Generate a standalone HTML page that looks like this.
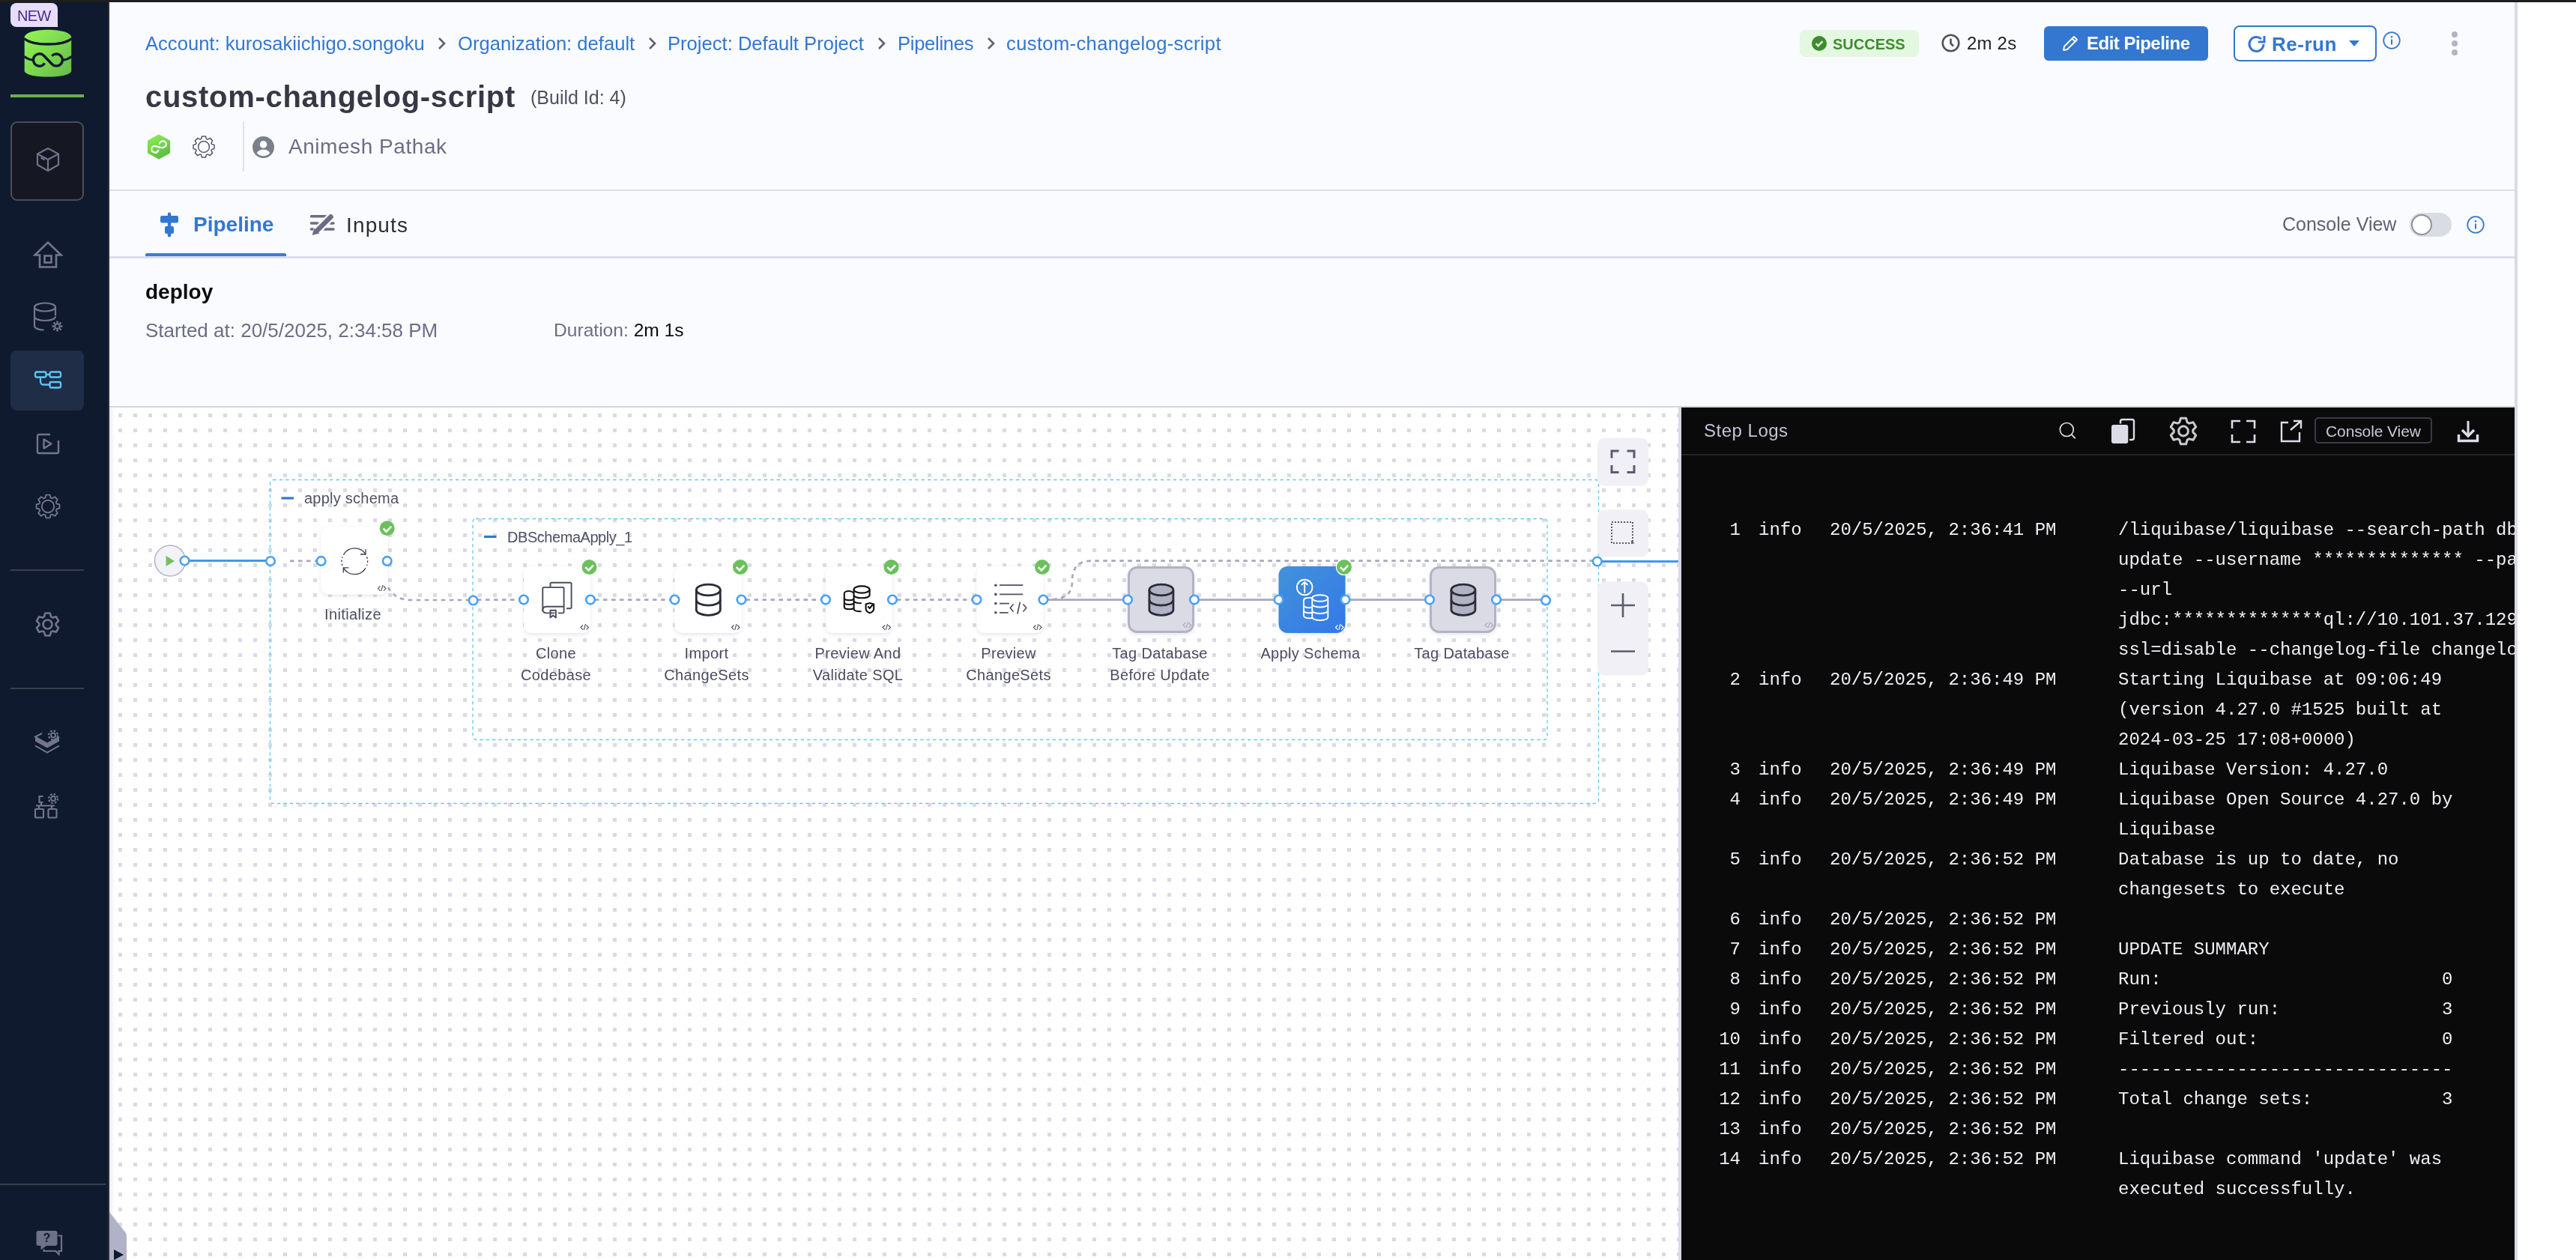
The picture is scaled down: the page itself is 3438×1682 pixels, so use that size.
<!DOCTYPE html>
<html><head><meta charset="utf-8">
<style>
*{box-sizing:border-box;margin:0;padding:0}
html,body{width:3438px;height:1682px;overflow:hidden;background:#fff;font-family:"Liberation Sans",sans-serif}
.t,.mono{will-change:transform}
.a{position:absolute}
.t{position:absolute;white-space:pre;line-height:1}
#top{left:0;top:0;width:3438px;height:3px;background:#1e1e1e}
#side{left:0;top:3px;width:146px;height:1679px;background:#101a2e;border-right:2px solid #2a2f3e}
#hdr{left:146px;top:3px;width:3210px;height:539px;background:#fafbfe}
#rb{left:3356px;top:3px;width:4px;height:1679px;background:#d9d9e6}
#canvas{left:146px;top:544px;width:2094px;height:1138px;background-color:#fff;
 background-image:linear-gradient(#fff,#fff),linear-gradient(#fff,#fff);}
#logs{left:2244px;top:544px;width:1112px;height:1138px;background:#0a0a0b;overflow:hidden}
.mono{font-family:"Liberation Mono",monospace}
</style></head><body>
<div id="top" class="a"></div>
<div id="side" class="a"></div>
<div id="hdr" class="a"></div>
<!--SIDE-->
<div class="a" style="left:14px;top:4px;width:63px;height:31.5px;background:#e7ddfb;border-radius:8px 8px 0 8px"></div>
<div class="t" style="left:23px;top:11px;font-size:20px;color:#4a2a8a;letter-spacing:-0.6px">NEW</div>
<svg class="a" style="left:30px;top:37px" width="68" height="68" viewBox="0 0 68 68">
 <defs><linearGradient id="lg" x1="0" y1="0" x2="1" y2="1"><stop offset="0" stop-color="#94f855"/><stop offset="1" stop-color="#66b94a"/></linearGradient></defs>
 <path d="M2.7 13 V57.5 C2.7 62.5 16 65.6 34 65.6 S65.2 62.5 65.2 57.5 V13 C65.2 7 52 2.8 34 2.8 S2.7 7 2.7 13z" fill="url(#lg)"/>
 <path d="M2.5 14.5 C8 19.5 20 22 34 22 S60 19.5 65.5 14.5" fill="none" stroke="#101a2e" stroke-width="3.3"/>
 <path d="M2.5 38.5 C6.5 41.5 10.5 43 14.6 43" fill="none" stroke="#101a2e" stroke-width="3.3"/>
 <path d="M53.6 43 C57.5 43 61.5 41.5 65.5 38.5" fill="none" stroke="#101a2e" stroke-width="3.3"/>
 <path d="M14.6 43 A8.1 8.1 0 0 1 28.5 37.3 L39.5 48.7 A8.1 8.1 0 1 0 39.3 37.6" fill="none" stroke="#101a2e" stroke-width="3.4"/>
 <path d="M14.6 43 A8.1 8.1 0 0 0 29.6 47.4" fill="none" stroke="#101a2e" stroke-width="3.4"/>
</svg>
<div class="a" style="left:14px;top:126px;width:98px;height:4px;background:#6db04f"></div>
<div class="a" style="left:14px;top:162px;width:98px;height:106px;background:#151823;border:2px solid #4a4d5c;border-radius:9px"></div>
<svg class="a" style="left:46px;top:195px" width="36" height="36" viewBox="0 0 36 36"><g fill="none" stroke="#6f7288" stroke-width="2.2" stroke-linejoin="round"><path d="M18 3L32 10.5V25L18 33L4 25V10.5z"/><path d="M4 10.5L18 18L32 10.5M18 18V33"/><path d="M8.5 15.5l5 2.7"/></g></svg>
<svg class="a" style="left:44px;top:321px" width="40" height="38" viewBox="0 0 40 38"><g fill="none" stroke="#72758d" stroke-width="2.6"><path d="M2.5 19.5L20 2.5 37.5 19.5H31V35.5H9V19.5z" stroke-linejoin="miter"/><rect x="15.5" y="20.5" width="9" height="9"/></g></svg>
<svg class="a" style="left:44px;top:402px" width="42" height="42" viewBox="0 0 42 42"><g fill="none" stroke="#72758d" stroke-width="2.2"><ellipse cx="16" cy="8" rx="14" ry="5.5"/><path d="M2 8V33c0 3 5 5.5 12.5 5.5M30 8V19.5"/><path d="M2 20.5c0 3 6 5.5 14 5.5s14-2.5 14-5.5"/></g><g transform="translate(32.5 33.5)"><circle r="3.3" fill="none" stroke="#72758d" stroke-width="2.2"/><path d="M0-7v2.6M0 4.4V7M-7 0h2.6M4.4 0H7M-5 -5l1.8 1.8M3.2 3.2L5 5M-5 5l1.8-1.8M3.2-3.2L5-5" stroke="#72758d" stroke-width="2.4"/></g></svg>
<div class="a" style="left:14px;top:468px;width:98px;height:80px;background:#1f2d47;border-radius:8px"></div>
<svg class="a" style="left:45px;top:494px" width="38" height="26" viewBox="0 0 38 26"><g fill="none" stroke="#5ec6f5" stroke-width="2.3"><rect x="2" y="2.5" width="14.5" height="7" rx="2"/><rect x="21.5" y="2.5" width="14.5" height="7" rx="2"/><rect x="21.5" y="16" width="14.5" height="7.5" rx="2"/><path d="M16.5 6h5M9 9.5v6a4 4 0 0 0 4 4h8.5"/></g></svg>
<svg class="a" style="left:47px;top:577px" width="34" height="30" viewBox="0 0 34 30"><g fill="none" stroke="#72758d" stroke-width="2.4" stroke-linejoin="round"><path d="M20 3H5a2 2 0 0 0-2 2v21a2 2 0 0 0 2 2h24a2 2 0 0 0 2-2V11"/><path d="M11.5 9.5v12l10-6z"/></g></svg>
<svg class="a" style="left:46px;top:658px" width="36" height="36" viewBox="0 0 36 36"><path d="M14.50 6.31 L15.40 2.62 L20.60 2.62 L21.50 6.31 L23.79 7.26 L27.04 5.28 L30.72 8.96 L28.74 12.21 L29.69 14.50 L33.38 15.40 L33.38 20.60 L29.69 21.50 L28.74 23.79 L30.72 27.04 L27.04 30.72 L23.79 28.74 L21.50 29.69 L20.60 33.38 L15.40 33.38 L14.50 29.69 L12.21 28.74 L8.96 30.72 L5.28 27.04 L7.26 23.79 L6.31 21.50 L2.62 20.60 L2.62 15.40 L6.31 14.50 L7.26 12.21 L5.28 8.96 L8.96 5.28 L12.21 7.26Z" fill="none" stroke="#72758d" stroke-width="1.9" stroke-linejoin="round"/><circle cx="18" cy="18" r="8.2" fill="none" stroke="#72758d" stroke-width="1.9"/></svg>
<div class="a" style="left:14px;top:760px;width:98px;height:2px;background:#3b3f4e"></div>
<svg class="a" style="left:46px;top:816px" width="35" height="35" viewBox="0 0 35 35"><path d="M12.90 7.29 L14.30 2.54 L20.70 2.54 L22.10 7.29 L24.04 8.41 L28.86 7.25 L32.06 12.79 L28.64 16.38 L28.64 18.62 L32.06 22.21 L28.86 27.75 L24.04 26.59 L22.10 27.71 L20.70 32.46 L14.30 32.46 L12.90 27.71 L10.96 26.59 L6.14 27.75 L2.94 22.21 L6.36 18.62 L6.36 16.38 L2.94 12.79 L6.14 7.25 L10.96 8.41Z" fill="none" stroke="#72758d" stroke-width="2.6" stroke-linejoin="round"/><circle cx="17.5" cy="17.5" r="6" fill="none" stroke="#72758d" stroke-width="2.6"/></svg>
<div class="a" style="left:14px;top:918px;width:98px;height:2px;background:#3b3f4e"></div>
<svg class="a" style="left:45px;top:973px" width="36" height="38" viewBox="0 0 36 38"><g fill="none" stroke="#72758d" stroke-width="2"><path d="M11 6L2 10.5 18 19.5 34 10.5"/><path d="M2 22.5L18 31.5 34 22.5"/></g><path d="M2 16.5L18 25.5 34 16.5 34 10.5 18 19.5 2 10.5z" fill="#72758d"/><g transform="translate(26 8.5)"><circle r="3" fill="none" stroke="#72758d" stroke-width="2"/><circle r="6" fill="none" stroke="#72758d" stroke-width="2.2" stroke-dasharray="2.6 2.1"/></g></svg>
<svg class="a" style="left:45px;top:1057px" width="36" height="38" viewBox="0 0 36 38"><g fill="none" stroke="#72758d" stroke-width="2.2"><path d="M12.5 6H7.5V14H12.5M10 14V18.5M3 18.5H28M7 18.5V23M24 18.5V23"/><rect x="2" y="23" width="11" height="11.5" rx="1"/><rect x="19.5" y="23" width="11" height="11.5" rx="1"/></g><g transform="translate(26 9)"><circle r="3" fill="none" stroke="#72758d" stroke-width="2"/><circle r="6" fill="none" stroke="#72758d" stroke-width="2.2" stroke-dasharray="2.6 2.1"/></g></svg>
<div class="a" style="left:0;top:1580px;width:141px;height:2px;background:#3b3f4e"></div>
<svg class="a" style="left:48px;top:1641px" width="38" height="35" viewBox="0 0 38 35"><path d="M3.5 2h22a3 2.8 0 0 1 3 3v14a3 3 0 0 1-3 3H14l-7.5 5.5V22H3.5a3 3 0 0 1-3-3V5a3 3 0 0 1 3-3z" fill="#6e7187"/><path d="M29.5 8.5h4.5v20.5h-3.5v4.5l-4-4.5H10.5v-2.5" fill="none" stroke="#6e7187" stroke-width="2.2"/><text x="14.5" y="17" font-family="Liberation Sans" font-weight="700" font-size="16" fill="#101a2e" text-anchor="middle">?</text></svg>
<!--/SIDE-->

<div class="a" style="left:146px;top:253px;width:3210px;height:2px;background:#dcdde7"></div>
<div class="a" style="left:146px;top:342px;width:3210px;height:3px;background:#dcdde7"></div>
<div class="a" style="left:194px;top:338px;width:188px;height:4px;background:#3b7bd4;border-radius:2px 2px 0 0"></div>
<div class="a" style="left:146px;top:542px;width:3210px;height:2px;background:#d5d6e1"></div>
<div id="canvas" class="a"></div>
<!--CANVAS-->
<svg class="a" style="left:146px;top:544px" width="2094" height="1138" viewBox="146 544 2094 1138">
<defs>
<pattern id="dots" x="158" y="552" width="20" height="20" patternUnits="userSpaceOnUse"><rect x="0" y="0" width="5" height="5" fill="#dadae6"/></pattern>
<linearGradient id="shl" x1="0" x2="1" y1="0" y2="0"><stop offset="0" stop-color="#e9e9ef" stop-opacity="0.9"/><stop offset="1" stop-color="#fff" stop-opacity="0"/></linearGradient>
<linearGradient id="blue" x1="0" y1="0" x2="1" y2="1"><stop offset="0" stop-color="#4192da"/><stop offset="1" stop-color="#3478e8"/></linearGradient>
<filter id="sh" x="-20%" y="-20%" width="140%" height="150%"><feDropShadow dx="0" dy="2" stdDeviation="2.5" flood-color="#60607a" flood-opacity="0.16"/></filter>
</defs>
<rect x="146" y="544" width="2094" height="1138" fill="#fff"/>
<rect x="146" y="544" width="2094" height="1138" fill="url(#dots)"/>
<rect x="146" y="544" width="10" height="1138" fill="url(#shl)"/>
<rect x="360.5" y="640.5" width="1773" height="432" rx="4" fill="none" stroke="#66c8f3" stroke-width="1.35" stroke-dasharray="4.4 4"/>
<rect x="631" y="692.5" width="1434" height="295" rx="4" fill="none" stroke="#66c8f3" stroke-width="1.35" stroke-dasharray="4.4 4"/>
<path d="M375.5 665h16.5" stroke="#3477d0" stroke-width="3.2"/>
<path d="M646 716.5h16.5" stroke="#3477d0" stroke-width="3.2"/>
<circle cx="227" cy="748.5" r="20.5" fill="#f2f2f9" stroke="#b3b4c6" stroke-width="1.5"/>
<path d="M221.5 742v14l11.5-7z" fill="#74c25c"/>
<path d="M252 748.5H355" stroke="#4098ee" stroke-width="3"/>
<circle cx="246.5" cy="748.5" r="5.8" fill="#fff" stroke="#4aa0f5" stroke-width="2.6"/>
<circle cx="361" cy="749" r="5.8" fill="#fff" stroke="#4aa0f5" stroke-width="2.6"/>
<path d="M387 748.8H423" stroke="#a7a8ba" stroke-width="2.7" stroke-dasharray="5.5 5.5" fill="none"/>
<path d="M518 784 Q527 801 549 801 H626" stroke="#a7a8ba" stroke-width="2.7" stroke-dasharray="5.5 5.5" fill="none"/>
<path d="M637 800.6H693" stroke="#a7a8ba" stroke-width="2.7" stroke-dasharray="5.5 5.5" fill="none"/>
<path d="M794.0 800.6H894.5" stroke="#a7a8ba" stroke-width="2.7" stroke-dasharray="5.5 5.5" fill="none"/>
<path d="M995.5 800.6H1096.0" stroke="#a7a8ba" stroke-width="2.7" stroke-dasharray="5.5 5.5" fill="none"/>
<path d="M1197.0 800.6H1297.5" stroke="#a7a8ba" stroke-width="2.7" stroke-dasharray="5.5 5.5" fill="none"/>
<path d="M1398 800.6H2057" stroke="#a7a8ba" stroke-width="2.7" fill="none"/>
<path d="M1394 800.6 C1424 800.6 1431 792 1431 775 C1431 757 1440 748.7 1456 748.7 H2126" stroke="#a7a8ba" stroke-width="2.7" stroke-dasharray="5.5 5.5" fill="none"/>
<path d="M2137 749.5H2240" stroke="#4098ee" stroke-width="3"/>
<rect x="428.5" y="703.5" width="89" height="90" rx="10" fill="#fff" filter="url(#sh)"/>
<g fill="none" stroke="#3a3d4d" stroke-width="1.3"><path d="M458.3 740.6A17.3 17.3 0 0 1 488.0 740.0"/><path d="M488.0 758.4A17.3 17.3 0 0 1 458.3 757.9"/><path d="M457.0 755.1A17.3 17.3 0 0 1 457.0 743.3" stroke-dasharray="2.6 2.6"/><path d="M489.6 743.3A17.3 17.3 0 0 1 489.6 755.1" stroke-dasharray="2.6 2.6"/><path d="M488.0 733.2V740.0H481.0"/><path d="M458.3 764.6V757.9H465.3"/></g>
<path d="M507.5 782.5 l-3 3.1 3 3.1 M511.0 781 l-2.2 7.8 M512.0 782.5 l3 3.1 -3 3.1" fill="none" stroke="#4f5162" stroke-width="1.15"/>
<circle cx="428.6" cy="748.9" r="5.8" fill="#fff" stroke="#4aa0f5" stroke-width="2.6"/>
<circle cx="516.7" cy="748.9" r="5.8" fill="#fff" stroke="#4aa0f5" stroke-width="2.6"/>
<circle cx="516.7" cy="705.3" r="10" fill="#6cc05b"/><path d="M511.50000000000006 705.5l4.2 4.2 6.4-6.8" fill="none" stroke="#fff" stroke-width="2.6"/>
<rect x="699.0" y="756" width="89" height="89" rx="10" fill="#fff" filter="url(#sh)"/>
<rect x="900.5" y="756" width="89" height="89" rx="10" fill="#fff" filter="url(#sh)"/>
<rect x="1102.0" y="756" width="89" height="89" rx="10" fill="#fff" filter="url(#sh)"/>
<rect x="1303.5" y="756" width="89" height="89" rx="10" fill="#fff" filter="url(#sh)"/>
<rect x="1506.5" y="757.5" width="86" height="86" rx="11" fill="#dbdbe5" stroke="#b1b2c4" stroke-width="3" filter="url(#sh)"/>
<rect x="1706.5" y="756" width="89" height="89" rx="12" fill="url(#blue)" filter="url(#sh)"/>
<rect x="1909.5" y="757.5" width="86" height="86" rx="11" fill="#dbdbe5" stroke="#b1b2c4" stroke-width="3" filter="url(#sh)"/>
<g fill="none" stroke="#4a4c5e" stroke-width="1.9" stroke-linejoin="round"><path d="M734.5 783.8V779a1.3 1.3 0 0 1 1.3-1.3h25.5a1.3 1.3 0 0 1 1.3 1.3v32a1.3 1.3 0 0 1-1.3 1.3H756"/><path d="M724.3 816V785.4a1.3 1.3 0 0 1 1.3-1.3h25.7a1.3 1.3 0 0 1 1.3 1.3v31.7a1.3 1.3 0 0 1-1.3 1.3H745"/><path d="M740.3 818.4H730c-3.5 0-5.7-1.8-5.7-4.3s2.2-4.3 5.7-4.3h22.5"/><path d="M734.5 814.8v9.6l3.7-3 3.7 3v-9.6z"/></g>
<g stroke="#2a2c38" stroke-width="2.8" fill="none"><path d="M929.3 787.5160000000001V813.884A16.0 7.416 0 0 0 961.3 813.884V787.5160000000001"/><ellipse cx="945.3" cy="787.5160000000001" rx="16.0" ry="7.416"/><path d="M929.3 800.7A16.0 7.416 0 0 0 961.3 800.7" fill="none"/></g>
<g stroke="#2a2c38" stroke-width="2.8" fill="#b1b2c3"><path d="M1533.9 787.5160000000001V813.884A16.0 7.416 0 0 0 1565.9 813.884V787.5160000000001"/><ellipse cx="1549.9" cy="787.5160000000001" rx="16.0" ry="7.416"/><path d="M1533.9 800.7A16.0 7.416 0 0 0 1565.9 800.7" fill="none"/></g>
<g stroke="#2a2c38" stroke-width="2.8" fill="#b1b2c3"><path d="M1936.9 787.5160000000001V813.884A16.0 7.416 0 0 0 1968.9 813.884V787.5160000000001"/><ellipse cx="1952.9" cy="787.5160000000001" rx="16.0" ry="7.416"/><path d="M1936.9 800.7A16.0 7.416 0 0 0 1968.9 800.7" fill="none"/></g>
<g fill="none" stroke="#111" stroke-width="2.1"><path d="M1139.5 791.5c-2-1.7-5-2.5-6.5-2.5-3.6 0-6.2 1.5-6.2 3.3v18c0 1.8 2.8 3 6.4 3 2.5 0 5-.5 6.5-1.5"/><path d="M1126.8 798.3c0 1.8 2.8 3 6.4 3 2.5 0 5-.5 6.3-1.4M1126.8 804c0 1.8 2.8 3 6.4 3 2.5 0 5-.5 6.3-1.4"/><ellipse cx="1150.1" cy="787" rx="10.5" ry="4.6"/><path d="M1139.6 787v26c0 1.9 3.5 3.3 10 3.3"/><path d="M1160.6 787v7.5c0 2-4.5 3.8-10.5 3.8s-10.5-1.8-10.5-3.8M1139.6 802c0 2 4.5 3.3 10.2 3.3"/><path d="M1155.6 806.5l5.3-1.4 5.3 1.4v6c0 3-2.5 4.8-5.3 5.8-2.8-1-5.3-2.8-5.3-5.8z" /><path d="M1158.3 809.5l2.4 2.4 4-4.6"/></g>
<g fill="#4f5162"><circle cx="1328.9" cy="781.2" r="1.8"/><circle cx="1328.9" cy="793.4" r="1.8"/><circle cx="1328.9" cy="805.6" r="1.8"/><circle cx="1328.9" cy="817.8" r="1.8"/></g><g fill="none" stroke="#4f5162" stroke-width="1.7"><path d="M1334 781.2h31.3M1334 793.4h31.3M1334 805.6h13M1334 817.8h11.7"/><path d="M1352.5 806.5l-4.2 5 4.2 5M1365.5 806.5l4.2 5-4.2 5M1361.3 803.8l-3.4 15.7"/></g>
<g fill="none" stroke="#fff" stroke-width="1.9"><circle cx="1741.2" cy="784" r="10.3"/><path d="M1741.2 791.5v-14.5M1737 781l4.2-4.2 4.2 4.2"/><path d="M1751.5 798.2c-1.3-.2-2.7-.3-3.8-.3-4.5 0-7.7 1.4-7.7 3.2v21c0 1.8 3.4 3.2 7.8 3.2 1.3 0 2.5-.1 3.7-.3M1740 808c0 1.8 3.4 3.2 7.8 3.2 1.3 0 2.5-.1 3.7-.3M1740 815c0 1.8 3.4 3.2 7.8 3.2 1.3 0 2.5-.1 3.7-.3"/><ellipse cx="1761.8" cy="798.5" rx="10.5" ry="4.3"/><path d="M1751.3 798.5v25.5c0 2.2 4.7 4 10.5 4s10.5-1.8 10.5-4V798.5M1751.3 806.5c0 2.2 4.7 4 10.5 4s10.5-1.8 10.5-4M1751.3 815c0 2.2 4.7 4 10.5 4s10.5-1.8 10.5-4"/></g>
<path d="M778.0 834.5 l-3 3.1 3 3.1 M781.5 833 l-2.2 7.8 M782.5 834.5 l3 3.1 -3 3.1" fill="none" stroke="#4f5162" stroke-width="1.15"/>
<path d="M979.5 834.5 l-3 3.1 3 3.1 M983.0 833 l-2.2 7.8 M984.0 834.5 l3 3.1 -3 3.1" fill="none" stroke="#4f5162" stroke-width="1.15"/>
<path d="M1181.0 834.5 l-3 3.1 3 3.1 M1184.5 833 l-2.2 7.8 M1185.5 834.5 l3 3.1 -3 3.1" fill="none" stroke="#4f5162" stroke-width="1.15"/>
<path d="M1382.5 834.5 l-3 3.1 3 3.1 M1386.0 833 l-2.2 7.8 M1387.0 834.5 l3 3.1 -3 3.1" fill="none" stroke="#4f5162" stroke-width="1.15"/>
<path d="M1582.0 831.5 l-3 3.1 3 3.1 M1585.5 830 l-2.2 7.8 M1586.5 831.5 l3 3.1 -3 3.1" fill="none" stroke="#a9aabb" stroke-width="1.15"/>
<path d="M1785.5 834.5 l-3 3.1 3 3.1 M1789.0 833 l-2.2 7.8 M1790.0 834.5 l3 3.1 -3 3.1" fill="none" stroke="#fff" stroke-width="1.15"/>
<path d="M1985.0 831.5 l-3 3.1 3 3.1 M1988.5 830 l-2.2 7.8 M1989.5 831.5 l3 3.1 -3 3.1" fill="none" stroke="#a9aabb" stroke-width="1.15"/>
<circle cx="699.0" cy="800.6" r="5.8" fill="#fff" stroke="#4aa0f5" stroke-width="2.6"/>
<circle cx="788.0" cy="800.6" r="5.8" fill="#fff" stroke="#4aa0f5" stroke-width="2.6"/>
<circle cx="900.5" cy="800.6" r="5.8" fill="#fff" stroke="#4aa0f5" stroke-width="2.6"/>
<circle cx="989.5" cy="800.6" r="5.8" fill="#fff" stroke="#4aa0f5" stroke-width="2.6"/>
<circle cx="1102.0" cy="800.6" r="5.8" fill="#fff" stroke="#4aa0f5" stroke-width="2.6"/>
<circle cx="1191.0" cy="800.6" r="5.8" fill="#fff" stroke="#4aa0f5" stroke-width="2.6"/>
<circle cx="1303.5" cy="800.6" r="5.8" fill="#fff" stroke="#4aa0f5" stroke-width="2.6"/>
<circle cx="1392.5" cy="800.6" r="5.8" fill="#fff" stroke="#4aa0f5" stroke-width="2.6"/>
<circle cx="1505.0" cy="800.6" r="5.8" fill="#fff" stroke="#4aa0f5" stroke-width="2.6"/>
<circle cx="1594.0" cy="800.6" r="5.8" fill="#fff" stroke="#4aa0f5" stroke-width="2.6"/>
<circle cx="1706.5" cy="800.6" r="5.8" fill="#fff" stroke="#4aa0f5" stroke-width="2.6"/>
<circle cx="1795.5" cy="800.6" r="5.8" fill="#fff" stroke="#4aa0f5" stroke-width="2.6"/>
<circle cx="1908.0" cy="800.6" r="5.8" fill="#fff" stroke="#4aa0f5" stroke-width="2.6"/>
<circle cx="1997.0" cy="800.6" r="5.8" fill="#fff" stroke="#4aa0f5" stroke-width="2.6"/>
<circle cx="631.6" cy="801.5" r="5.8" fill="#fff" stroke="#4aa0f5" stroke-width="2.6"/>
<circle cx="2063" cy="801.4" r="5.8" fill="#fff" stroke="#4aa0f5" stroke-width="2.6"/>
<circle cx="2131.8" cy="749.5" r="5.8" fill="#fff" stroke="#4aa0f5" stroke-width="2.6"/>
<circle cx="786.5" cy="757" r="10" fill="#6cc05b"/><path d="M781.3 757.2l4.2 4.2 6.4-6.8" fill="none" stroke="#fff" stroke-width="2.6"/>
<circle cx="988" cy="757" r="10" fill="#6cc05b"/><path d="M982.8 757.2l4.2 4.2 6.4-6.8" fill="none" stroke="#fff" stroke-width="2.6"/>
<circle cx="1189.5" cy="757" r="10" fill="#6cc05b"/><path d="M1184.3 757.2l4.2 4.2 6.4-6.8" fill="none" stroke="#fff" stroke-width="2.6"/>
<circle cx="1391" cy="757" r="10" fill="#6cc05b"/><path d="M1385.8 757.2l4.2 4.2 6.4-6.8" fill="none" stroke="#fff" stroke-width="2.6"/>
<circle cx="1794" cy="757" r="11.2" fill="#fff"/><circle cx="1794" cy="757" r="10" fill="#6cc05b"/><path d="M1788.8 757.2l4.2 4.2 6.4-6.8" fill="none" stroke="#fff" stroke-width="2.6"/>
<rect x="2132" y="584.5" width="68" height="64" rx="9" fill="#f0f0f6"/>
<rect x="2132" y="680.5" width="68" height="63" rx="9" fill="#f0f0f6"/>
<rect x="2132" y="776.5" width="68" height="125" rx="9" fill="#f0f0f6"/>
<g fill="none" stroke="#5a5d70" stroke-width="3"><path d="M2151 611.5v-9.5h9.5M2171.5 602h9.5v9.5M2181 621v9.5h-9.5M2160.5 630.5H2151V621"/></g>
<g fill="none" stroke="#5a5d70" stroke-width="2" stroke-dasharray="2 2"><path d="M2151 697h28v28h-28z"/></g><path d="M2177 722l3.5 3.5" stroke="#5a5d70" stroke-width="1.5"/>
<path d="M2150 808h32M2166 792v32M2150 869.5h32" stroke="#5a5d70" stroke-width="2.6"/>
</svg>
<div class="t" style="left:406px;top:654.7px;font-size:20px;color:#4f5162;letter-spacing:0.25px">apply schema</div>
<div class="t" style="left:676.5px;top:707px;font-size:20px;color:#4f5162;letter-spacing:-0.45px">DBSchemaApply_1</div>
<div class="t" style="left:321px;top:810.4px;width:300px;text-align:center;font-size:20px;color:#4a4c5e;letter-spacing:0.35px">Initialize</div>
<div class="t" style="left:591.5px;top:862.4px;width:300px;text-align:center;font-size:20px;color:#4a4c5e;letter-spacing:0.35px">Clone</div>
<div class="t" style="left:591.5px;top:891.4px;width:300px;text-align:center;font-size:20px;color:#4a4c5e;letter-spacing:0.35px">Codebase</div>
<div class="t" style="left:793px;top:862.4px;width:300px;text-align:center;font-size:20px;color:#4a4c5e;letter-spacing:0.35px">Import</div>
<div class="t" style="left:793px;top:891.4px;width:300px;text-align:center;font-size:20px;color:#4a4c5e;letter-spacing:0.35px">ChangeSets</div>
<div class="t" style="left:994.5px;top:862.4px;width:300px;text-align:center;font-size:20px;color:#4a4c5e;letter-spacing:0.35px">Preview And</div>
<div class="t" style="left:994.5px;top:891.4px;width:300px;text-align:center;font-size:20px;color:#4a4c5e;letter-spacing:0.35px">Validate SQL</div>
<div class="t" style="left:1196px;top:862.4px;width:300px;text-align:center;font-size:20px;color:#4a4c5e;letter-spacing:0.35px">Preview</div>
<div class="t" style="left:1196px;top:891.4px;width:300px;text-align:center;font-size:20px;color:#4a4c5e;letter-spacing:0.35px">ChangeSets</div>
<div class="t" style="left:1397.5px;top:862.4px;width:300px;text-align:center;font-size:20px;color:#4a4c5e;letter-spacing:0.35px">Tag Database</div>
<div class="t" style="left:1397.5px;top:891.4px;width:300px;text-align:center;font-size:20px;color:#4a4c5e;letter-spacing:0.35px">Before Update</div>
<div class="t" style="left:1599px;top:862.4px;width:300px;text-align:center;font-size:20px;color:#4a4c5e;letter-spacing:0.35px">Apply Schema</div>
<div class="t" style="left:1800.5px;top:862.4px;width:300px;text-align:center;font-size:20px;color:#4a4c5e;letter-spacing:0.35px">Tag Database</div>
<!--/CANVAS-->
<div class="a" style="left:2240px;top:544px;width:4px;height:1138px;background:#d9d9e6"></div>
<div id="logs" class="a"></div>
<div id="rb" class="a"></div>
<!-- breadcrumb -->
<div class="t" style="left:194px;top:46px;font-size:25.6px;color:#3477d0">Account: kurosakiichigo.songoku</div>
<div class="t" style="left:611px;top:46px;font-size:25.6px;color:#3477d0">Organization: default</div>
<div class="t" style="left:891px;top:46px;font-size:25.6px;color:#3477d0">Project: Default Project</div>
<div class="t" style="left:1198px;top:46px;font-size:25.6px;color:#3477d0;letter-spacing:-0.3px">Pipelines</div>
<div class="t" style="left:1343px;top:46px;font-size:25.6px;color:#3477d0;letter-spacing:0.35px">custom-changelog-script</div>
<svg class="a" style="left:580px;top:48px" width="20" height="20" viewBox="0 0 20 20"><path d="M6 3l7 7-7 7" fill="none" stroke="#5d6073" stroke-width="2.6"/></svg>
<svg class="a" style="left:861px;top:48px" width="20" height="20" viewBox="0 0 20 20"><path d="M6 3l7 7-7 7" fill="none" stroke="#5d6073" stroke-width="2.6"/></svg>
<svg class="a" style="left:1167px;top:48px" width="20" height="20" viewBox="0 0 20 20"><path d="M6 3l7 7-7 7" fill="none" stroke="#5d6073" stroke-width="2.6"/></svg>
<svg class="a" style="left:1313px;top:48px" width="20" height="20" viewBox="0 0 20 20"><path d="M6 3l7 7-7 7" fill="none" stroke="#5d6073" stroke-width="2.6"/></svg>
<!-- title -->
<div class="t" style="left:194px;top:109px;font-size:40px;font-weight:700;color:#373845;letter-spacing:0.7px">custom-changelog-script</div>
<div class="t" style="left:708px;top:118px;font-size:25px;color:#4f5162">(Build Id: 4)</div>
<!-- icons row -->
<svg class="a" style="left:196px;top:179px" width="32" height="34" viewBox="0 0 32 34">
 <defs><linearGradient id="hx" x1="0.2" y1="0" x2="0.7" y2="1"><stop offset="0" stop-color="#86ec52"/><stop offset="1" stop-color="#5cbb42"/></linearGradient></defs>
 <path d="M16 2 L29.6 9.6 L29.6 24.4 L16 32 L2.4 24.4 L2.4 9.6 Z" fill="url(#hx)" stroke="url(#hx)" stroke-width="3" stroke-linejoin="round"/>
 <path d="M15.6 20.7 C15 24 12.5 25 10.6 24.6 C8 24.2 6.2 22 6.2 20.3 C6.2 17.8 8.2 15.9 10.2 15.9 C13 15.9 15.5 17.7 19.2 18 C22 18.2 25.8 17 25.8 13.7 C25.8 11 23.5 9.3 21.5 9.3 C19 9.3 16.8 11 16.8 13.7" fill="none" stroke="#fff" stroke-width="2.2" stroke-linecap="butt"/>
</svg>
<svg class="a" style="left:256px;top:180px" width="32" height="32" viewBox="0 0 32 32"><path d="M12.60 5.33 L13.50 2.02 L18.50 2.02 L19.40 5.33 L21.14 6.05 L24.12 4.35 L27.65 7.88 L25.95 10.86 L26.67 12.60 L29.98 13.50 L29.98 18.50 L26.67 19.40 L25.95 21.14 L27.65 24.12 L24.12 27.65 L21.14 25.95 L19.40 26.67 L18.50 29.98 L13.50 29.98 L12.60 26.67 L10.86 25.95 L7.88 27.65 L4.35 24.12 L6.05 21.14 L5.33 19.40 L2.02 18.50 L2.02 13.50 L5.33 12.60 L6.05 10.86 L4.35 7.88 L7.88 4.35 L10.86 6.05Z" fill="none" stroke="#555870" stroke-width="1.5" stroke-linejoin="round"/><circle cx="16" cy="16" r="7.4" fill="none" stroke="#555870" stroke-width="1.5"/></svg>
<div class="a" style="left:324px;top:163px;width:2px;height:66px;background:#dfe0e8"></div>
<svg class="a" style="left:337px;top:182px" width="29" height="29" viewBox="0 0 28 28"><circle cx="14" cy="14" r="14" fill="#7b7f8a"/><circle cx="14" cy="10.5" r="4.6" fill="#fafbfe"/><path d="M5.5 21.5c1.8-3.2 5-4.6 8.5-4.6s6.7 1.4 8.5 4.6c-2.2 2.5-5.2 3.9-8.5 3.9s-6.3-1.4-8.5-3.9z" fill="#fafbfe"/></svg>
<div class="t" style="left:385px;top:182px;font-size:28px;color:#6b6e86;letter-spacing:0.55px">Animesh Pathak</div>
<!-- right header -->
<div class="a" style="left:2402px;top:40px;width:159px;height:36px;background:#e4f7e0;border-radius:7px"></div>
<svg class="a" style="left:2418px;top:48px" width="20" height="20" viewBox="0 0 20 20"><circle cx="10" cy="10" r="10" fill="#3d8c30"/><path d="M5.5 10.2l3 3 6-6" fill="none" stroke="#e4f7e0" stroke-width="2.4"/></svg>
<div class="t" style="left:2446px;top:49px;font-size:20px;font-weight:700;color:#3d8c30">SUCCESS</div>
<svg class="a" style="left:2591px;top:45px" width="25" height="25" viewBox="0 0 25 25"><circle cx="12.5" cy="12.5" r="10.8" fill="none" stroke="#4f5162" stroke-width="2.6"/><path d="M12.5 6.5v6.5l3.5 3.5" fill="none" stroke="#4f5162" stroke-width="2.6"/></svg>
<div class="t" style="left:2625px;top:46px;font-size:24px;color:#22222a;letter-spacing:0.2px">2m 2s</div>
<div class="a" style="left:2728px;top:35px;width:219px;height:46px;background:#3477d0;border-radius:6px"></div>
<svg class="a" style="left:2750px;top:45px" width="26" height="26" viewBox="0 0 26 26"><path d="M4 22l1-5L18 4l4 4L9 21z M15.5 6.5l4 4" fill="none" stroke="#fff" stroke-width="1.8" stroke-linejoin="round"/></svg>
<div class="t" style="left:2785px;top:46px;font-size:24px;font-weight:700;color:#fff;letter-spacing:-0.5px">Edit Pipeline</div>
<div class="a" style="left:2981px;top:34px;width:191px;height:48px;background:#fff;border:2px solid #3477d0;border-radius:8px"></div>
<svg class="a" style="left:2998px;top:45px" width="28" height="28" viewBox="0 0 28 28"><path d="M23 14a9.5 9.5 0 1 1-3-7" fill="none" stroke="#3477d0" stroke-width="3"/><path d="M24 3v8h-8" fill="none" stroke="#3477d0" stroke-width="3"/></svg>
<div class="t" style="left:3032px;top:46px;font-size:26px;font-weight:700;color:#3477d0;letter-spacing:0.5px">Re-run</div>
<svg class="a" style="left:3135px;top:54px" width="14" height="9" viewBox="0 0 14 9"><path d="M0 0h14L7 8z" fill="#3477d0"/></svg>
<svg class="a" style="left:3180px;top:42px" width="24" height="24" viewBox="0 0 24 24"><circle cx="12" cy="12" r="10.8" fill="none" stroke="#3477d0" stroke-width="1.8"/><circle cx="12" cy="7.2" r="1.3" fill="#3477d0"/><path d="M12 10.5v7" stroke="#3477d0" stroke-width="2"/></svg>
<svg class="a" style="left:3270px;top:40px" width="12" height="36" viewBox="0 0 12 36"><circle cx="6" cy="6" r="4" fill="#b2b3c4"/><circle cx="6" cy="18" r="4" fill="#b2b3c4"/><circle cx="6" cy="30" r="4" fill="#b2b3c4"/></svg>
<!-- tabs -->
<svg class="a" style="left:212px;top:282px" width="28" height="36" viewBox="0 0 28 36"><rect x="2" y="6" width="24" height="9.5" rx="2.2" fill="#3477d0"/><rect x="8" y="20" width="12" height="10" rx="2.2" fill="#3477d0"/><rect x="11.8" y="1.5" width="4.4" height="33" rx="2.2" fill="#3477d0"/></svg>
<div class="t" style="left:258px;top:286px;font-size:28px;font-weight:700;color:#3477d0">Pipeline</div>
<svg class="a" style="left:412px;top:284px" width="36" height="32" viewBox="0 0 36 32"><g stroke="#6b6d85" stroke-width="3.6" stroke-linecap="round"><path d="M3.5 4.7H24M3.5 14H12M29 14H33M3.5 22H6M21 22H33"/></g><path d="M11.5 23.5L29.5 5.5" stroke="#fafbfe" stroke-width="11" stroke-linecap="round"/><path d="M12 23L29.5 5.5" stroke="#6b6d85" stroke-width="6.5" stroke-linecap="round"/><path d="M4.5 30L7.5 20.5 14.5 27.5z" fill="#6b6d85"/></svg>
<div class="t" style="left:462px;top:287px;font-size:28px;color:#2c2d38;letter-spacing:1.15px">Inputs</div>
<div class="t" style="left:3046px;top:287px;font-size:25px;color:#5e6076">Console View</div>
<div class="a" style="left:3216px;top:284px;width:56px;height:32px;border-radius:16px;background:#d9dce3"></div>
<div class="a" style="left:3218px;top:286px;width:28px;height:28px;border-radius:14px;background:#fff;border:2px solid #90929c"></div>
<svg class="a" style="left:3292px;top:288px" width="24" height="24" viewBox="0 0 24 24"><circle cx="12" cy="12" r="10.8" fill="none" stroke="#3477d0" stroke-width="1.8"/><circle cx="12" cy="7.2" r="1.3" fill="#3477d0"/><path d="M12 10.5v7" stroke="#3477d0" stroke-width="2"/></svg>
<!-- stage info -->
<div class="t" style="left:194px;top:376px;font-size:28px;font-weight:700;color:#0b0b0d">deploy</div>
<div class="t" style="left:194px;top:428px;font-size:26px;color:#6b6e86">Started at: 20/5/2025, 2:34:58 PM</div>
<div class="t" style="left:739px;top:429px;font-size:24.6px;color:#6b6e86">Duration: <span style="color:#0b0b0d">2m 1s</span></div>

<!-- log header -->
<div class="t" style="left:2274px;top:563px;font-size:24px;color:#c4c4d4;letter-spacing:0.5px">Step Logs</div>
<div class="a" style="left:2244px;top:606px;width:1112px;height:2px;background:#24242a"></div>
<svg class="a" style="left:2744px;top:560px" width="30" height="30" viewBox="0 0 30 30"><circle cx="14.3" cy="13.5" r="9" fill="none" stroke="#dcdce6" stroke-width="1.7"/><path d="M20.6 19.8l5.2 5.5" stroke="#dcdce6" stroke-width="1.8"/></svg>
<svg class="a" style="left:2816px;top:558px" width="36" height="36" viewBox="0 0 36 36"><path d="M14 7.5V4.5a2.5 2.5 0 0 1 2.5-2.5h13a2.5 2.5 0 0 1 2.5 2.5v22a2.5 2.5 0 0 1-2.5 2.5H26" fill="none" stroke="#dcdce6" stroke-width="2.4"/><rect x="2" y="9" width="22.3" height="25" rx="3" fill="#dcdce6"/></svg>
<svg class="a" style="left:2894px;top:555px" width="40" height="42" viewBox="0 0 40 42"><path d="M14.80 8.80 L16.40 3.27 L23.60 3.27 L25.20 8.80 L27.53 10.15 L33.12 8.77 L36.72 15.00 L32.73 19.16 L32.73 21.84 L36.72 26.00 L33.12 32.23 L27.53 30.85 L25.20 32.20 L23.60 37.73 L16.40 37.73 L14.80 32.20 L12.47 30.85 L6.88 32.23 L3.28 26.00 L7.27 21.84 L7.27 19.16 L3.28 15.00 L6.88 8.77 L12.47 10.15Z" fill="none" stroke="#c9c9cd" stroke-width="3" stroke-linejoin="round"/><circle cx="20" cy="20.5" r="6.4" fill="none" stroke="#c9c9cd" stroke-width="3"/></svg>
<svg class="a" style="left:2976px;top:559px" width="36" height="34" viewBox="0 0 36 34"><path d="M3 13V3h11M22 3h11v10M33 21v10H22M14 31H3V21" fill="none" stroke="#dcdce6" stroke-width="2.6"/></svg>
<svg class="a" style="left:3042px;top:559px" width="34" height="34" viewBox="0 0 34 34"><path d="M12 5H3v25h24v-12" fill="none" stroke="#dcdce6" stroke-width="2.4"/><path d="M15 15L29 3M19 3h10v10" fill="none" stroke="#dcdce6" stroke-width="2.4"/></svg>
<div class="a" style="left:3089px;top:557px;width:157px;height:35px;border:2px solid #3a3b47;border-radius:5px"></div>
<div class="t" style="left:3104px;top:565px;font-size:21px;color:#c8c8d8;letter-spacing:-0.1px">Console View</div>
<svg class="a" style="left:3278px;top:560px" width="32" height="32" viewBox="0 0 32 32"><path d="M16 2v20" stroke="#dcdce6" stroke-width="3"/><path d="M8 14l8 8 8-8" fill="none" stroke="#dcdce6" stroke-width="3.4"/><path d="M3.5 20v8.5h25V20" fill="none" stroke="#dcdce6" stroke-width="3.4"/></svg>
<!-- log body -->
<div class="a mono" id="logbody" style="left:2244px;top:608px;width:1112px;height:1074px;overflow:hidden;color:#f0f0f4;font-size:24px;line-height:40px">
<div class="t" style="left:0;top:80px;width:79px;text-align:right;line-height:40px">1</div>
<div class="t" style="left:103px;top:80px;line-height:40px">info</div>
<div class="t" style="left:198px;top:80px;line-height:40px">20/5/2025, 2:36:41 PM</div>
<div class="t" style="left:583px;top:80px;line-height:40px">/liquibase/liquibase --search-path dbchangelog</div>
<div class="t" style="left:583px;top:120px;line-height:40px">update --username ************** --password</div>
<div class="t" style="left:583px;top:160px;line-height:40px">--url</div>
<div class="t" style="left:583px;top:200px;line-height:40px">jdbc:**************ql://10.101.37.129:5432/postgres</div>
<div class="t" style="left:583px;top:240px;line-height:40px">ssl=disable --changelog-file changelog.yaml</div>
<div class="t" style="left:0;top:280px;width:79px;text-align:right;line-height:40px">2</div>
<div class="t" style="left:103px;top:280px;line-height:40px">info</div>
<div class="t" style="left:198px;top:280px;line-height:40px">20/5/2025, 2:36:49 PM</div>
<div class="t" style="left:583px;top:280px;line-height:40px">Starting Liquibase at 09:06:49</div>
<div class="t" style="left:583px;top:320px;line-height:40px">(version 4.27.0 #1525 built at</div>
<div class="t" style="left:583px;top:360px;line-height:40px">2024-03-25 17:08+0000)</div>
<div class="t" style="left:0;top:400px;width:79px;text-align:right;line-height:40px">3</div>
<div class="t" style="left:103px;top:400px;line-height:40px">info</div>
<div class="t" style="left:198px;top:400px;line-height:40px">20/5/2025, 2:36:49 PM</div>
<div class="t" style="left:583px;top:400px;line-height:40px">Liquibase Version: 4.27.0</div>
<div class="t" style="left:0;top:440px;width:79px;text-align:right;line-height:40px">4</div>
<div class="t" style="left:103px;top:440px;line-height:40px">info</div>
<div class="t" style="left:198px;top:440px;line-height:40px">20/5/2025, 2:36:49 PM</div>
<div class="t" style="left:583px;top:440px;line-height:40px">Liquibase Open Source 4.27.0 by</div>
<div class="t" style="left:583px;top:480px;line-height:40px">Liquibase</div>
<div class="t" style="left:0;top:520px;width:79px;text-align:right;line-height:40px">5</div>
<div class="t" style="left:103px;top:520px;line-height:40px">info</div>
<div class="t" style="left:198px;top:520px;line-height:40px">20/5/2025, 2:36:52 PM</div>
<div class="t" style="left:583px;top:520px;line-height:40px">Database is up to date, no</div>
<div class="t" style="left:583px;top:560px;line-height:40px">changesets to execute</div>
<div class="t" style="left:0;top:600px;width:79px;text-align:right;line-height:40px">6</div>
<div class="t" style="left:103px;top:600px;line-height:40px">info</div>
<div class="t" style="left:198px;top:600px;line-height:40px">20/5/2025, 2:36:52 PM</div>
<div class="t" style="left:583px;top:600px;line-height:40px"></div>
<div class="t" style="left:0;top:640px;width:79px;text-align:right;line-height:40px">7</div>
<div class="t" style="left:103px;top:640px;line-height:40px">info</div>
<div class="t" style="left:198px;top:640px;line-height:40px">20/5/2025, 2:36:52 PM</div>
<div class="t" style="left:583px;top:640px;line-height:40px">UPDATE SUMMARY</div>
<div class="t" style="left:0;top:680px;width:79px;text-align:right;line-height:40px">8</div>
<div class="t" style="left:103px;top:680px;line-height:40px">info</div>
<div class="t" style="left:198px;top:680px;line-height:40px">20/5/2025, 2:36:52 PM</div>
<div class="t" style="left:583px;top:680px;line-height:40px">Run:                          0</div>
<div class="t" style="left:0;top:720px;width:79px;text-align:right;line-height:40px">9</div>
<div class="t" style="left:103px;top:720px;line-height:40px">info</div>
<div class="t" style="left:198px;top:720px;line-height:40px">20/5/2025, 2:36:52 PM</div>
<div class="t" style="left:583px;top:720px;line-height:40px">Previously run:               3</div>
<div class="t" style="left:0;top:760px;width:79px;text-align:right;line-height:40px">10</div>
<div class="t" style="left:103px;top:760px;line-height:40px">info</div>
<div class="t" style="left:198px;top:760px;line-height:40px">20/5/2025, 2:36:52 PM</div>
<div class="t" style="left:583px;top:760px;line-height:40px">Filtered out:                 0</div>
<div class="t" style="left:0;top:800px;width:79px;text-align:right;line-height:40px">11</div>
<div class="t" style="left:103px;top:800px;line-height:40px">info</div>
<div class="t" style="left:198px;top:800px;line-height:40px">20/5/2025, 2:36:52 PM</div>
<div class="t" style="left:583px;top:800px;line-height:40px">-------------------------------</div>
<div class="t" style="left:0;top:840px;width:79px;text-align:right;line-height:40px">12</div>
<div class="t" style="left:103px;top:840px;line-height:40px">info</div>
<div class="t" style="left:198px;top:840px;line-height:40px">20/5/2025, 2:36:52 PM</div>
<div class="t" style="left:583px;top:840px;line-height:40px">Total change sets:            3</div>
<div class="t" style="left:0;top:880px;width:79px;text-align:right;line-height:40px">13</div>
<div class="t" style="left:103px;top:880px;line-height:40px">info</div>
<div class="t" style="left:198px;top:880px;line-height:40px">20/5/2025, 2:36:52 PM</div>
<div class="t" style="left:583px;top:880px;line-height:40px"></div>
<div class="t" style="left:0;top:920px;width:79px;text-align:right;line-height:40px">14</div>
<div class="t" style="left:103px;top:920px;line-height:40px">info</div>
<div class="t" style="left:198px;top:920px;line-height:40px">20/5/2025, 2:36:52 PM</div>
<div class="t" style="left:583px;top:920px;line-height:40px">Liquibase command 'update' was</div>
<div class="t" style="left:583px;top:960px;line-height:40px">executed successfully.</div>
</div>
<svg class="a" style="left:146px;top:1618px" width="24" height="64" viewBox="0 0 24 64"><path d="M0 0 L22 28 Q23 30 23 34 V64 H0z" fill="#b1b2c5"/><path d="M6 50v14l13-7z" fill="#101a2e"/></svg>
</body></html>
